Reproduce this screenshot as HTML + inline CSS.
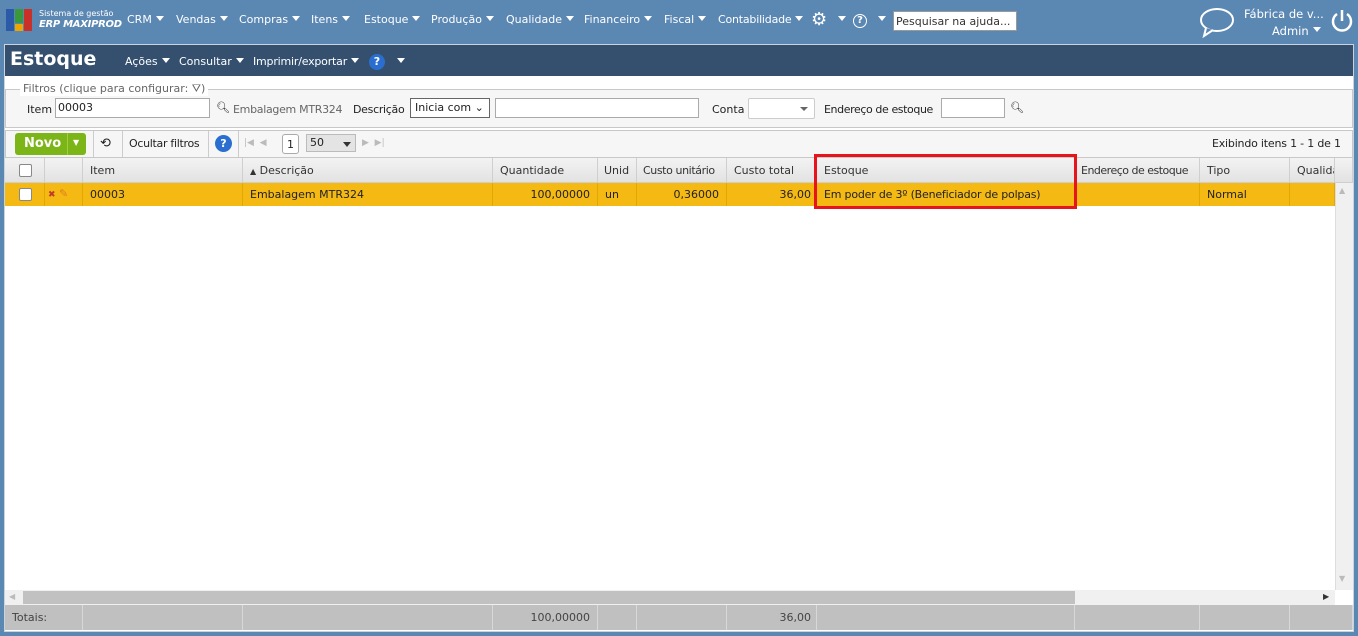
<!DOCTYPE html>
<html><head><meta charset="utf-8"><style>
*{box-sizing:border-box;margin:0;padding:0}
body{width:1358px;height:636px;background:#5b87b3;font-family:"DejaVu Sans","Liberation Sans",sans-serif;font-size:11px;color:#222;position:relative;overflow:hidden}
.a{position:absolute;white-space:nowrap}
.top{color:#fff;font-size:11px;top:13px}
.tri{display:inline-block;width:0;height:0;border-left:4px solid transparent;border-right:4px solid transparent;border-top:5px solid #fff;vertical-align:middle;margin-left:4px;position:relative;top:-2px}
.panel{position:absolute;left:4px;top:44px;width:1350px;height:588px;background:#fff;border:1px solid #c9d3de}
.title{position:absolute;left:5px;top:45px;width:1348px;height:31px;background:#34506e}
.hd,.rw,.ft{white-space:nowrap;overflow:hidden}
.hd{position:absolute;top:158px;height:25px;background:linear-gradient(#f3f3f3,#e2e2e2);border-right:1px solid #cfcfcf;border-bottom:1px solid #cfcfcf;padding:6px 7px;color:#333}
.rw{position:absolute;top:183px;height:23px;background:#f5b914;border-right:1px solid #e0a800;padding:5px 7px;color:#222}
.ft{position:absolute;top:605px;height:25px;background:#c0c0c0;border-right:1px solid #d8d8d8;padding:6px 7px;color:#444}
.r{text-align:right}
.cb{position:absolute;width:13px;height:13px;border:1px solid #888;border-radius:2px;background:#fff}
</style></head><body>
<div class="a" style="left:6px;top:9px;width:8px;height:22px;background:#2a5aa8"></div>
<div class="a" style="left:15px;top:9px;width:8px;height:14px;background:#3a9a3a"></div>
<div class="a" style="left:15px;top:24px;width:8px;height:7px;background:#f0a400"></div>
<div class="a" style="left:24px;top:9px;width:8px;height:22px;background:#c8302a"></div>
<div class="a" style="left:39px;top:9px;color:#fff;font-size:8px">Sistema de gestão</div>
<div class="a" style="left:39px;top:19px;color:#fff;font-size:10px;font-style:italic;font-weight:bold;letter-spacing:-0.3px">ERP MAXIPROD</div>
<div class="a top" style="left:127px">CRM<span class="tri"></span></div>
<div class="a top" style="left:176px">Vendas<span class="tri"></span></div>
<div class="a top" style="left:239px">Compras<span class="tri"></span></div>
<div class="a top" style="left:311px">Itens<span class="tri"></span></div>
<div class="a top" style="left:364px">Estoque<span class="tri"></span></div>
<div class="a top" style="left:431px">Produção<span class="tri"></span></div>
<div class="a top" style="left:506px">Qualidade<span class="tri"></span></div>
<div class="a top" style="left:584px">Financeiro<span class="tri"></span></div>
<div class="a top" style="left:664px">Fiscal<span class="tri"></span></div>
<div class="a top" style="left:718px;letter-spacing:-0.2px">Contabilidade<span class="tri"></span></div>
<div class="a" style="left:811px;top:9px;color:#fff;font-size:18px">⚙</div>
<div class="a top" style="left:834px"><span class="tri"></span></div>
<div class="a" style="left:853px;top:14px;width:14px;height:14px;border:1.5px solid #fff;border-radius:50%;color:#fff;font-size:10px;text-align:center;line-height:11px;font-weight:bold">?</div>
<div class="a top" style="left:874px"><span class="tri"></span></div>
<div class="a" style="left:893px;top:11px;width:124px;height:20px;background:#fff;border:1px solid #999;padding:3px 2px;font-size:11px;color:#333;overflow:hidden">Pesquisar na ajuda...</div>
<svg class="a" style="left:1198px;top:6px" width="38" height="32"><ellipse cx="19" cy="14" rx="16" ry="11" fill="none" stroke="#fff" stroke-width="2"/><path d="M8 22 L6 30 L15 24" fill="#5b87b3" stroke="#fff" stroke-width="2"/></svg>
<div class="a" style="left:1244px;top:7px;color:#fff;font-size:11.5px">Fábrica de v...</div>
<div class="a" style="left:1272px;top:24px;color:#fff;font-size:11.5px">Admin<span class="tri"></span></div>
<svg class="a" style="left:1330px;top:8px" width="24" height="26"><path d="M7 6 A9 9 0 1 0 17 6" fill="none" stroke="#fff" stroke-width="2.5"/><line x1="12" y1="2" x2="12" y2="13" stroke="#fff" stroke-width="2.5"/></svg>

<div class="panel"></div>
<div class="title"></div>
<div class="a" style="left:10px;top:48px;color:#fff;font-size:19px;font-weight:bold">Estoque</div>
<div class="a top" style="left:125px;top:55px">Ações<span class="tri"></span></div>
<div class="a top" style="left:179px;top:55px">Consultar<span class="tri"></span></div>
<div class="a top" style="left:253px;top:55px;letter-spacing:-0.2px">Imprimir/exportar<span class="tri"></span></div>
<div class="a" style="left:369px;top:54px;width:16px;height:16px;border-radius:50%;background:#2a6fd0;color:#fff;font-size:11px;font-weight:bold;text-align:center;line-height:16px">?</div>
<div class="a top" style="left:393px;top:55px"><span class="tri"></span></div>

<div class="a" style="left:5px;top:90px;width:1348px;height:38px;border:1px solid #c8c8c8;border-top:none;background:#f6f6f6"></div>
<div class="a" style="left:5px;top:89px;width:1348px;border-top:1px solid #c8c8c8"></div>
<div class="a" style="left:20px;top:82px;background:#fff;padding:0 3px;color:#666">Filtros (clique para configurar: ⛛)</div>
<div class="a" style="left:27px;top:103px">Item</div>
<div class="a" style="left:55px;top:98px;width:155px;height:20px;border:1px solid #aaa;background:#fff;padding:2px 2px">00003</div>
<div class="a" style="left:216px;top:101px">🔍︎</div>
<div class="a" style="left:233px;top:103px;color:#666;letter-spacing:-0.3px">Embalagem MTR324</div>
<div class="a" style="left:353px;top:103px;letter-spacing:-0.3px">Descrição</div>
<div class="a" style="left:410px;top:98px;width:80px;height:20px;border:1px solid #666;background:#fff;padding:2px 4px">Inicia com ⌄</div>
<div class="a" style="left:495px;top:98px;width:204px;height:20px;border:1px solid #aaa;background:#fff"></div>
<div class="a" style="left:712px;top:103px">Conta</div>
<div class="a" style="left:748px;top:98px;width:67px;height:21px;border:1px solid #ccc;background:#fff;border-radius:2px"><span class="a" style="right:6px;top:8px;border-left:4px solid transparent;border-right:4px solid transparent;border-top:4px solid #666"></span></div>
<div class="a" style="left:824px;top:103px;letter-spacing:-0.4px">Endereço de estoque</div>
<div class="a" style="left:941px;top:98px;width:64px;height:20px;border:1px solid #aaa;background:#fff"></div>
<div class="a" style="left:1010px;top:101px">🔍︎</div>

<div class="a" style="left:5px;top:130px;width:1348px;height:28px;border:1px solid #c8c8c8;background:#f6f6f6"></div>
<div class="a" style="left:15px;top:133px;width:71px;height:22px;background:#7cb518;border-radius:3px;color:#fff;font-weight:bold;font-size:13px;padding:3px 9px">Novo<span class="a" style="left:52px;top:0;height:22px;border-left:1px solid #9cd040;padding:5px 5px;font-size:8px">▼</span></div>
<div class="a" style="left:93px;top:131px;height:26px;border-left:1px solid #ccc"></div>
<div class="a" style="left:100px;top:136px;font-size:13px">⟲</div>
<div class="a" style="left:122px;top:131px;height:26px;border-left:1px solid #ccc"></div>
<div class="a" style="left:129px;top:137px;letter-spacing:-0.3px">Ocultar filtros</div>
<div class="a" style="left:208px;top:131px;height:26px;border-left:1px solid #ccc"></div>
<div class="a" style="left:215px;top:135px;width:17px;height:17px;border-radius:50%;background:#2a6fd0;color:#fff;font-size:11px;font-weight:bold;text-align:center;line-height:17px">?</div>
<div class="a" style="left:238px;top:131px;height:26px;border-left:1px solid #ccc"></div>
<div class="a" style="left:244px;top:138px;color:#bbb;font-size:9px">|◀ &nbsp;◀</div>
<div class="a" style="left:282px;top:134px;width:17px;height:20px;border:1px solid #aaa;border-radius:3px;background:#fff;text-align:center;padding-top:3px">1</div>
<div class="a" style="left:306px;top:134px;width:50px;height:18px;border:1px solid #bbb;background:#e4e4e4;padding:1px 3px">50<span class="a" style="right:4px;top:7px;border-left:4px solid transparent;border-right:4px solid transparent;border-top:5px solid #333"></span></div>
<div class="a" style="left:362px;top:138px;color:#bbb;font-size:9px">▶ &nbsp;▶|</div>
<div class="a" style="left:1212px;top:137px;letter-spacing:-0.2px">Exibindo itens 1 - 1 de 1</div>

<div class="hd" style="left:5px;width:40px"></div><div class="cb" style="left:19px;top:164px"></div>
<div class="hd" style="left:45px;width:38px"></div>
<div class="hd" style="left:83px;width:160px">Item</div>
<div class="hd" style="left:243px;width:250px"><span style="font-size:8px">▲</span> Descrição</div>
<div class="hd" style="left:493px;width:105px">Quantidade</div>
<div class="hd" style="left:598px;width:39px;padding-left:6px">Unid</div>
<div class="hd" style="left:637px;width:90px;padding-left:6px;letter-spacing:-0.4px">Custo unitário</div>
<div class="hd" style="left:727px;width:90px">Custo total</div>
<div class="hd" style="left:817px;width:258px">Estoque</div>
<div class="hd" style="left:1075px;width:125px;padding-left:6px;letter-spacing:-0.5px">Endereço de estoque</div>
<div class="hd" style="left:1200px;width:90px">Tipo</div>
<div class="hd" style="left:1290px;width:45px">Qualidade</div>
<div class="hd" style="left:1335px;width:18px"></div>

<div class="rw" style="left:5px;width:40px"></div><div class="cb" style="left:19px;top:188px"></div>
<div class="rw" style="left:45px;width:38px;padding:4px 3px"><span style="color:#c0392b;font-size:9px;font-weight:bold">✖</span> <span style="color:#e07b20">✎</span></div>
<div class="rw" style="left:83px;width:160px">00003</div>
<div class="rw" style="left:243px;width:250px">Embalagem MTR324</div>
<div class="rw r" style="left:493px;width:105px">100,00000</div>
<div class="rw" style="left:598px;width:39px">un</div>
<div class="rw r" style="left:637px;width:90px">0,36000</div>
<div class="rw r" style="left:727px;width:90px;padding-right:5px">36,00</div>
<div class="rw" style="left:817px;width:258px;letter-spacing:-0.2px">Em poder de 3º (Beneficiador de polpas)</div>
<div class="rw" style="left:1075px;width:125px"></div>
<div class="rw" style="left:1200px;width:90px">Normal</div>
<div class="rw" style="left:1290px;width:45px"></div>
<div class="a" style="left:1335px;top:183px;width:18px;height:407px;background:#f0f0f0;border-left:1px solid #ddd"></div>
<div class="a" style="left:1339px;top:186px;color:#bbb;font-size:8px">▲</div>
<div class="a" style="left:1339px;top:574px;color:#bbb;font-size:8px">▼</div>
<div class="a" style="left:814px;top:154px;width:263px;height:55px;border:3px solid #e8141c"></div>

<div class="a" style="left:5px;top:590px;width:1330px;height:15px;background:#f0f0f0"></div>
<div class="a" style="left:23px;top:591px;width:1052px;height:13px;background:#c1c1c1"></div>
<div class="a" style="left:9px;top:592px;color:#bbb;font-size:8px">◀</div>
<div class="a" style="left:1323px;top:592px;color:#333;font-size:8px">▶</div>

<div class="ft" style="left:5px;width:78px">Totais:</div>
<div class="ft" style="left:83px;width:160px"></div>
<div class="ft" style="left:243px;width:250px"></div>
<div class="ft r" style="left:493px;width:105px">100,00000</div>
<div class="ft" style="left:598px;width:39px"></div>
<div class="ft" style="left:637px;width:90px"></div>
<div class="ft r" style="left:727px;width:90px;padding-right:5px">36,00</div>
<div class="ft" style="left:817px;width:258px"></div>
<div class="ft" style="left:1075px;width:125px"></div>
<div class="ft" style="left:1200px;width:90px"></div>
<div class="ft" style="left:1290px;width:63px"></div>
</body></html>
